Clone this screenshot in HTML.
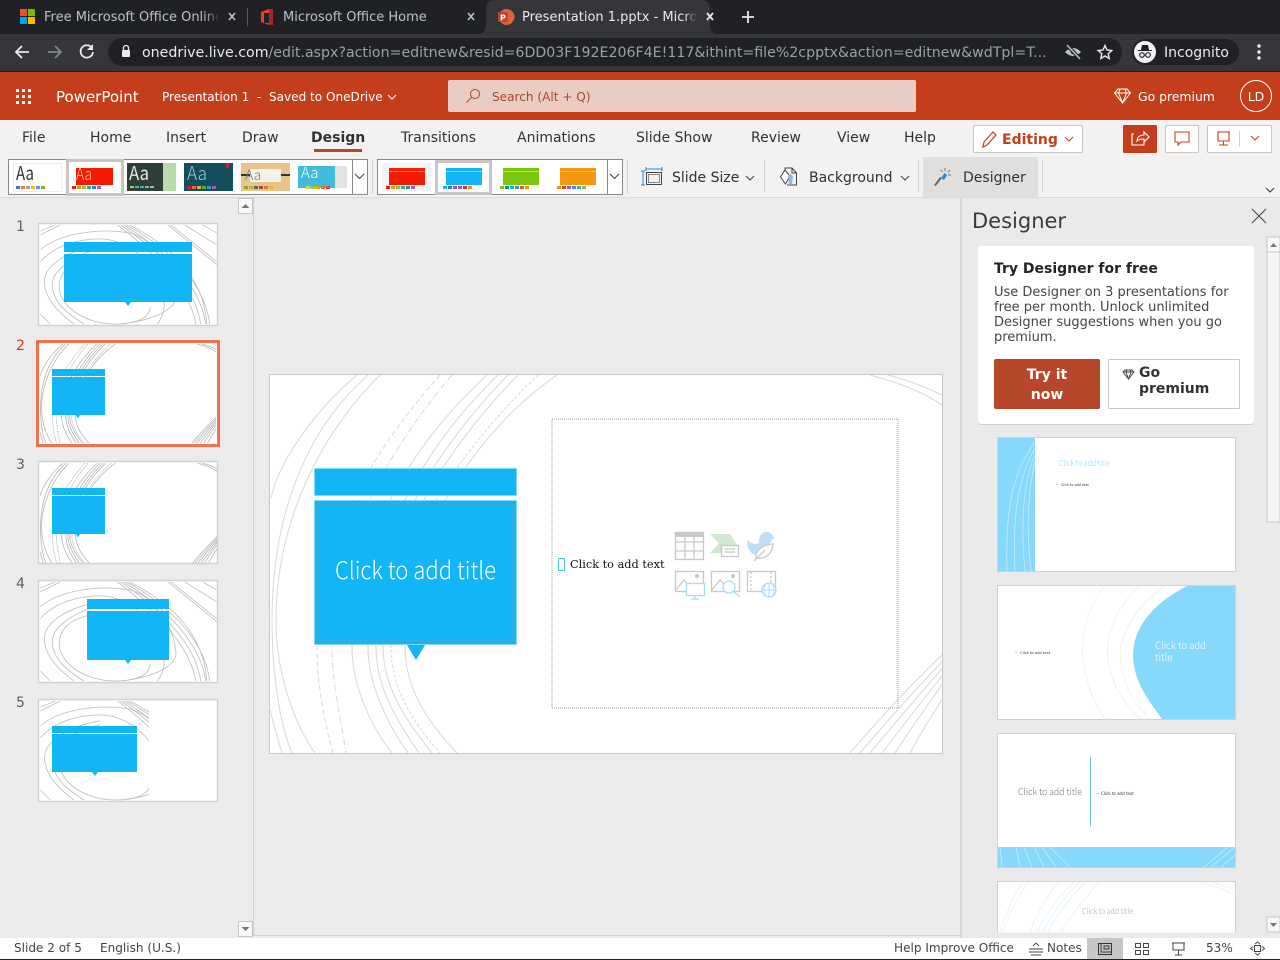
<!DOCTYPE html>
<html><head><meta charset="utf-8"><title>Presentation 1.pptx</title>
<style>
html,body{margin:0;padding:0;width:1280px;height:960px;overflow:hidden;background:#edebe9}
body>svg{display:block;position:absolute;left:0;top:0}
text{font-family:"DejaVu Sans","Liberation Sans",sans-serif;white-space:pre}
.rb{font-size:14px;fill:#323130}
.st{font-size:12.07px;fill:#444}
.lt{font-family:"Noto Sans CJK JP","Liberation Sans",sans-serif;font-weight:300}
.rg{font-family:"Noto Sans CJK JP","Liberation Sans",sans-serif;font-weight:400}
.n{font-size:14px;fill:#605e5c}
</style></head><body>
<svg width="1280" height="960" viewBox="0 0 1280 960">
<defs>
<linearGradient id="f1"><stop offset="0" stop-color="#202124" stop-opacity="0"/><stop offset="1" stop-color="#202124"/></linearGradient>
<linearGradient id="f2"><stop offset="0" stop-color="#35363a" stop-opacity="0"/><stop offset="1" stop-color="#35363a"/></linearGradient>
<g id="c2" fill="none">
<path d="M87 0C40 40 8 90 1 123"/>
<path d="M98 0C30 60 2 150 2 245C2 300 10 350 22 378"/>
<path d="M110 0C40 70 6 160 6 245C6 300 25 350 45 378"/>
<path d="M0 335C4 350 8 365 12 378"/>
<path d="M170 0C90 90 47 180 47 272C47 310 55 350 63 378" stroke-dasharray="5 3"/>
<path d="M182 0C105 90 62 190 62 272C62 310 72 350 76 378" stroke-dasharray="6 2 1 2"/>
<path d="M217 0C130 80 82 180 82 272C82 310 100 350 122 378"/>
<path d="M228 0C145 80 98 180 98 272C98 310 118 350 138 378"/>
<path d="M238 0C155 85 106 180 106 272C106 315 130 350 149 378"/>
<path d="M248 0C165 85 113 180 113 272C113 315 140 350 162 378"/>
<path d="M268 0C180 85 121 180 121 272C121 315 145 350 170 378" stroke-dasharray="3 2"/>
<path d="M287 0C200 60 135 170 135 272C135 315 160 350 187 378"/>
<path d="M600 0C630 8 655 18 672 30M618 0C640 6 660 14 672 20"/>
<path d="M672 280Q630 320 580 378M672 287Q635 325 590 378M672 294Q640 330 600 378M672 301Q645 335 612 378M672 310Q650 340 625 378M672 325Q655 350 640 378"/>
</g>
<g id="c1" fill="none">
<path d="M0 25C20 8 60 3 90 8C115 14 135 45 137 72C137 85 115 96 82 100"/>
<path d="M0 37C15 20 40 14 60 14C95 14 125 50 125 80C125 88 122 95 118 100"/>
<path d="M60 20C30 25 4 40 4 57C4 75 20 90 34 100"/>
<path d="M60 24C35 30 12 45 12 60C12 78 28 90 44 100"/>
<path d="M48 34C30 38 19 48 19 62C19 82 45 100 75 100C95 100 110 95 111 83"/>
<path d="M0 90Q5 95 10 100M0 6L15 0M0 10L20 0"/>
<path d="M87 0C115 15 165 50 171 100M84 0C112 17 160 52 167 100M90 0C120 15 165 45 168 100M81 0C108 18 155 55 162 100M78 0C104 20 150 58 157 100"/>
<path d="M129 0L178 40M132 0L178 37M146 0L178 20M164 0L178 8"/>
</g>
</defs>

<!-- browser chrome -->
<rect width="1280" height="34" fill="#202124"/>
<rect y="34" width="1280" height="37" fill="#35363a"/>
<rect y="71" width="1280" height="1" fill="#1d1d1f"/>
<path d="M477 34q9 0 9-9V9q0-9 9-9H701q9 0 9 9V25q0 9 9 9z" fill="#35363a"/>
<rect x="20" y="9" width="7" height="7" fill="#f25022"/><rect x="28" y="9" width="7" height="7" fill="#7fba00"/><rect x="20" y="17" width="7" height="7" fill="#00a4ef"/><rect x="28" y="17" width="7" height="7" fill="#ffb900"/>
<text x="44" y="21" font-size="13" fill="#bdc1c6">Free Microsoft Office Online</text>
<rect x="204" y="4" width="16" height="26" fill="url(#f1)"/><rect x="220" y="4" width="6" height="26" fill="#202124"/>
<path d="M229 13l6 7M235 13l-6 7" stroke="#bdc1c6" stroke-width="1.6"/>
<rect x="247" y="8" width="1" height="18" fill="#55565a"/>
<path d="M261 12l8-3h4v16h-4l-8-3z" fill="#e8432a"/><path d="M264 13h5v10h-5z" fill="#202124"/><path d="M269 9h4v16h-4z" fill="#a4262c"/>
<text x="283" y="21" font-size="13" fill="#bdc1c6">Microsoft Office Home</text>
<path d="M468 13l6 7M474 13l-6 7" stroke="#bdc1c6" stroke-width="1.6"/>
<circle cx="506.500" cy="17" r="8" fill="#e0603a"/><rect x="498" y="12" width="10" height="10" rx="1" fill="#b7472a"/><text x="500" y="20.500" font-size="8" font-weight="bold" fill="#fff">P</text>
<text x="522" y="21" font-size="13" fill="#e8eaed">Presentation 1.pptx - Micro</text>
<rect x="684" y="4" width="13" height="26" fill="url(#f2)"/>
<path d="M707 13l6 7M713 13l-6 7" stroke="#e8eaed" stroke-width="1.8"/>
<path d="M748 11v12M742 17h12" stroke="#e8eaed" stroke-width="1.8"/>
<path d="M29 52H16M22 46l-6 6 6 6" fill="none" stroke="#e8eaed" stroke-width="1.8"/>
<path d="M61 52H48M55 46l6 6-6 6" fill="none" stroke="#80868b" stroke-width="1.8"/>
<path d="M92 48a6.200 6.200 0 1 0 1 4" fill="none" stroke="#e8eaed" stroke-width="1.800"/><path d="M93 44v6h-6z" fill="#e8eaed"/>
<rect x="108" y="38" width="1014" height="28" rx="14" fill="#202124"/>
<rect x="122" y="50" width="8" height="7" rx="1" fill="#e8eaed"/><path d="M123.500 50v-2a2.500 2.500 0 0 1 5 0v2" fill="none" stroke="#e8eaed" stroke-width="1.300"/>
<text x="142" y="57" font-size="14.180" fill="#e8eaed">onedrive.live.com<tspan fill="#9aa0a6">/edit.aspx?action=editnew&amp;resid=6DD03F192E206F4E!117&amp;ithint=file%2cpptx&amp;action=editnew&amp;wdTpl=T...</tspan></text>
<path d="M1065 52q8-8 16 0q-8 8-16 0z" fill="#bdc1c6"/><circle cx="1073" cy="52" r="2.200" fill="#202124"/><path d="M1067 45l13 14" stroke="#202124" stroke-width="3.500"/><path d="M1067 45l13 14" stroke="#bdc1c6" stroke-width="1.500"/>
<path d="M1105 45.500l2 4.500 4.800.5-3.600 3.200 1 4.800-4.200-2.500-4.200 2.500 1-4.800-3.600-3.200 4.800-.5z" fill="none" stroke="#e8eaed" stroke-width="1.400"/>
<rect x="1132" y="39" width="107" height="26" rx="13" fill="#202124"/>
<circle cx="1145" cy="52" r="11" fill="#f1f3f4"/>
<path d="M1138 50h14v1h-14zM1141 50l1-5h6l1 5z" fill="#202124"/><circle cx="1142" cy="55" r="2.300" fill="none" stroke="#202124" stroke-width="1.200"/><circle cx="1148" cy="55" r="2.300" fill="none" stroke="#202124" stroke-width="1.200"/>
<text x="1164" y="57" font-size="14" fill="#e8eaed">Incognito</text>
<circle cx="1259" cy="46" r="1.700" fill="#e8eaed"/><circle cx="1259" cy="52" r="1.700" fill="#e8eaed"/><circle cx="1259" cy="58" r="1.700" fill="#e8eaed"/>

<!-- title bar -->
<rect y="72" width="1280" height="48" fill="#c43e1c"/>
<g fill="#fff"><rect x="16" y="89" width="3" height="3"/><rect x="22" y="89" width="3" height="3"/><rect x="28" y="89" width="3" height="3"/><rect x="16" y="95" width="3" height="3"/><rect x="22" y="95" width="3" height="3"/><rect x="28" y="95" width="3" height="3"/><rect x="16" y="101" width="3" height="3"/><rect x="22" y="101" width="3" height="3"/><rect x="28" y="101" width="3" height="3"/></g>
<text x="56" y="102" font-size="15" fill="#fff">PowerPoint</text>
<text x="162" y="101" font-size="12.070" fill="#fff">Presentation 1  -  Saved to OneDrive</text>
<path d="M388 95l4 4 4-4" fill="none" stroke="#fff"/>
<rect x="448" y="80" width="468" height="32" rx="2" fill="#e9cdc5"/>
<circle cx="475" cy="94" r="4.500" fill="none" stroke="#a4482e"/><path d="M471.500 97.500l-5 5" stroke="#a4482e"/>
<text x="492" y="101" font-size="12.100" fill="#a8472c">Search (Alt + Q)</text>
<path d="M1114.500 93l3.500-4h9l3.500 4-8 10z M1114.500 93h16M1120 89l-1.500 4 4 10 4-10-1.500-4" fill="none" stroke="#fff"/>
<text x="1138" y="101" font-size="12.400" fill="#fff">Go premium</text>
<circle cx="1256" cy="96" r="15.500" fill="none" stroke="#fff"/>
<text x="1256" y="101" font-size="12.500" fill="#fff" text-anchor="middle">LD</text>

<!-- ribbon -->
<rect y="120" width="1280" height="77" fill="#f3f2f1"/>
<rect y="197" width="1280" height="1" fill="#dcdad8"/>
<text class="rb" x="22" y="142">File</text>
<text class="rb" x="90" y="142">Home</text>
<text class="rb" x="166" y="142">Insert</text>
<text class="rb" x="242" y="142">Draw</text>
<text class="rb" x="311" y="142" font-weight="bold">Design</text>
<rect x="314" y="149" width="48" height="3" fill="#b7472a"/>
<text class="rb" x="401" y="142">Transitions</text>
<text class="rb" x="517" y="142">Animations</text>
<text class="rb" x="636" y="142">Slide Show</text>
<text class="rb" x="751" y="142">Review</text>
<text class="rb" x="837" y="142">View</text>
<text class="rb" x="904" y="142">Help</text>
<rect x="973.500" y="125.500" width="109" height="27" rx="1" fill="#fff" stroke="#c8c6c4"/>
<path d="M983 147l1-5 9-10 3 3-9 10z" fill="none" stroke="#c43e1c" stroke-width="1.200"/>
<text x="1002" y="144" font-size="14" font-weight="bold" fill="#c43e1c">Editing</text>
<path d="M1065 137l4 4 4-4" fill="none" stroke="#c43e1c"/>
<rect x="1123" y="125" width="34" height="28" rx="1" fill="#c43e1c"/>
<path d="M1134 134h-2v11h12v-4M1137 141c0-4 3-6 7-6v-3l5 5-5 5v-3c-3 0-5 0-7 2z" fill="none" stroke="#fff" stroke-width="1.100"/>
<rect x="1165.500" y="125.500" width="33" height="27" rx="1" fill="#fff" stroke="#c8c6c4"/>
<path d="M1175 132h14v10h-8l-3 3v-3h-3z" fill="none" stroke="#c43e1c" stroke-width="1.100"/>
<rect x="1207.500" y="125.500" width="64" height="27" rx="1" fill="#fff" stroke="#c8c6c4"/>
<path d="M1217 132h13M1218 132v9h11v-9M1223.500 141v4M1219 145h9" fill="none" stroke="#c43e1c" stroke-width="1.100"/>
<rect x="1239" y="131" width="1" height="16" fill="#d2d0ce"/>
<path d="M1251 136l4 4 4-4" fill="none" stroke="#c43e1c"/>

<!-- theme gallery -->
<rect x="8.500" y="159.500" width="359" height="35" fill="#fff" stroke="#8a8886"/>
<rect x="352" y="160" width="1" height="34" fill="#8a8886"/>
<path d="M355 174l4.500 4.500 4.500-4.500" fill="none" stroke="#444"/>
<rect x="372" y="160" width="1" height="34" fill="#d2d0ce"/>
<rect x="13.500" y="163.500" width="48" height="28" fill="#fff" stroke="#eee"/>
<text class="rg" x="16" y="180" font-size="19" fill="#333" textLength="18" lengthAdjust="spacingAndGlyphs">Aa</text>
<g><rect x="16" y="186" width="4" height="3" fill="#4472c4"/><rect x="21" y="186" width="4" height="3" fill="#ed7d31"/><rect x="26" y="186" width="4" height="3" fill="#a5a5a5"/><rect x="31" y="186" width="4" height="3" fill="#ffc000"/><rect x="36" y="186" width="4" height="3" fill="#5b9bd5"/><rect x="41" y="186" width="4" height="3" fill="#70ad47"/></g>
<rect x="67.500" y="160.500" width="55" height="34" fill="#fff" stroke="#c8c6c4" stroke-width="3"/>
<rect x="76" y="168" width="37" height="17" fill="#f61b00"/>
<text class="lt" x="76" y="180" font-size="17" fill="#fbb" textLength="16" lengthAdjust="spacingAndGlyphs">Aa</text>
<g><rect x="72" y="186" width="4" height="3" fill="#f61b00"/><rect x="77" y="186" width="4" height="3" fill="#f79009"/><rect x="82" y="186" width="4" height="3" fill="#8bc34a"/><rect x="87" y="186" width="4" height="3" fill="#2bb673"/><rect x="92" y="186" width="4" height="3" fill="#2e86c1"/><rect x="97" y="186" width="4" height="3" fill="#a65cc7"/></g>
<rect x="127" y="163" width="36" height="28" fill="#2c3e36"/><rect x="163" y="163" width="13" height="28" fill="#b7dca9"/>
<text class="rg" x="129" y="180" font-size="19" fill="#e6e6e6" textLength="20" lengthAdjust="spacingAndGlyphs">Aa</text>
<g><rect x="130" y="186" width="4" height="2" fill="#a3c76d"/><rect x="135" y="186" width="4" height="2" fill="#5bb58f"/><rect x="140" y="186" width="4" height="2" fill="#4aa"/><rect x="145" y="186" width="4" height="2" fill="#6bc"/><rect x="150" y="186" width="4" height="2" fill="#9bb"/></g>
<rect x="184" y="163" width="49" height="28" fill="#144d5b"/><rect x="226" y="163" width="3" height="5" fill="#c22"/>
<text class="lt" x="187" y="180" font-size="19" fill="#9cc" textLength="20" lengthAdjust="spacingAndGlyphs">Aa</text>
<g><rect x="187" y="186" width="4" height="3" fill="#c22"/><rect x="192" y="186" width="4" height="3" fill="#e63"/><rect x="197" y="186" width="4" height="3" fill="#ea3"/><rect x="202" y="186" width="4" height="3" fill="#5a5"/><rect x="207" y="186" width="4" height="3" fill="#39a"/><rect x="212" y="186" width="4" height="3" fill="#a5b"/></g>
<rect x="241" y="163" width="49" height="28" fill="#e8c48a"/><rect x="241" y="174" width="49" height="2" fill="#333"/><rect x="250" y="169" width="31" height="13" fill="#f3f1ec"/>
<text class="lt" x="245" y="180" font-size="14" fill="#777">Aa</text>
<g><rect x="244" y="186" width="4" height="3" fill="#8a3"/><rect x="249" y="186" width="4" height="3" fill="#ca3"/><rect x="254" y="186" width="4" height="3" fill="#567"/><rect x="259" y="186" width="4" height="3" fill="#a43"/><rect x="264" y="186" width="4" height="3" fill="#d73"/><rect x="269" y="186" width="4" height="3" fill="#db3"/></g>
<rect x="335" y="166" width="12" height="22" fill="#e3e3e3"/><rect x="298" y="166" width="37" height="22" fill="#41bbd9"/>
<text class="lt" x="301" y="178" font-size="15" fill="#fff">Aa</text>
<g><rect x="306" y="186" width="4" height="3" fill="#ec3"/><rect x="311" y="186" width="4" height="3" fill="#9c3"/><rect x="316" y="186" width="4" height="3" fill="#f90"/><rect x="321" y="186" width="4" height="3" fill="#f63"/><rect x="326" y="186" width="4" height="3" fill="#e44"/></g>

<!-- variants -->
<rect x="377.500" y="159.500" width="245" height="35" fill="#fff" stroke="#8a8886"/>
<rect x="607" y="160" width="1" height="34" fill="#8a8886"/>
<path d="M610 174l4.500 4.500 4.500-4.500" fill="none" stroke="#444"/>
<rect x="382" y="163" width="49" height="28" fill="#f4f4f4"/>
<rect x="389" y="168" width="36" height="17" fill="#f61b00"/><rect x="389" y="171" width="36" height="1" fill="#fa7a6a"/>
<g><rect x="386" y="186" width="4" height="3" fill="#f61b00"/><rect x="391" y="186" width="4" height="3" fill="#f79009"/><rect x="396" y="186" width="4" height="3" fill="#9cb33d"/><rect x="401" y="186" width="4" height="3" fill="#2bb673"/><rect x="406" y="186" width="4" height="3" fill="#2e86c1"/><rect x="411" y="186" width="4" height="3" fill="#a65cc7"/></g>
<rect x="436.500" y="161.500" width="54" height="32" fill="#fff" stroke="#c8c6c4" stroke-width="3"/>
<rect x="446" y="168" width="36" height="17" fill="#12b5f6"/><rect x="446" y="171" width="36" height="1" fill="#80d8fb"/>
<g><rect x="443" y="186" width="4" height="3" fill="#12b5f6"/><rect x="448" y="186" width="4" height="3" fill="#3f6fc4"/><rect x="453" y="186" width="4" height="3" fill="#a64cc7"/><rect x="458" y="186" width="4" height="3" fill="#d63fa8"/><rect x="463" y="186" width="4" height="3" fill="#d92b4b"/><rect x="468" y="186" width="4" height="3" fill="#f79009"/></g>
<rect x="503" y="168" width="36" height="17" fill="#7bc60e"/><rect x="503" y="171" width="36" height="1" fill="#b8e36f"/>
<g><rect x="500" y="186" width="4" height="3" fill="#7bc60e"/><rect x="505" y="186" width="4" height="3" fill="#0b9b6b"/><rect x="510" y="186" width="4" height="3" fill="#12b5d6"/><rect x="515" y="186" width="4" height="3" fill="#3f8fd4"/><rect x="520" y="186" width="4" height="3" fill="#e2572b"/><rect x="525" y="186" width="4" height="3" fill="#f79009"/></g>
<rect x="560" y="168" width="36" height="17" fill="#f4960f"/><rect x="560" y="171" width="36" height="1" fill="#fac77a"/>
<g><rect x="557" y="186" width="4" height="3" fill="#f4960f"/><rect x="562" y="186" width="4" height="3" fill="#e2472b"/><rect x="567" y="186" width="4" height="3" fill="#a64cd7"/><rect x="572" y="186" width="4" height="3" fill="#3f8fe4"/><rect x="577" y="186" width="4" height="3" fill="#2bb6b3"/><rect x="582" y="186" width="4" height="3" fill="#8bc34a"/></g>
<rect x="627" y="160" width="1" height="34" fill="#d2d0ce"/>

<!-- ribbon commands -->
<path d="M646 169h16M643 171v14" fill="none" stroke="#2b88d8"/><path d="M646 167v4M662 167v4M641 171h4M641 185h4" fill="none" stroke="#2b88d8"/>
<rect x="646.500" y="172.500" width="15" height="12" fill="none" stroke="#444"/><rect x="648.500" y="174.500" width="11" height="8" fill="none" stroke="#888"/>
<text class="rb" x="672" y="182">Slide Size</text>
<path d="M746 176l4 4 4-4" fill="none" stroke="#444"/>
<rect x="764" y="160" width="1" height="32" fill="#d2d0ce"/>
<path d="M785 172v-4h7l4.500 5v12h-9.500" fill="none" stroke="#444"/><path d="M792 168v5h4.500" fill="none" stroke="#444"/><path d="M780.500 177l4.500-7 5 6-4.500 8z" fill="#fff" stroke="#444"/><path d="M788 176l3-2 2 3-1 7h-3z" fill="#8abbe6"/>
<text class="rb" x="809" y="182">Background</text>
<path d="M901 176l4 4 4-4" fill="none" stroke="#444"/>
<rect x="918" y="160" width="1" height="32" fill="#d2d0ce"/>
<rect x="923" y="157" width="115" height="40" fill="#e1dfdd"/>
<path d="M935 185.500l6-8" stroke="#666" stroke-width="2"/><path d="M941 178l3.500-5 2.500 2-3 5z" fill="#2b88d8"/><path d="M945 168v3M950 170l-2 2M951 175h-3M941 170l1.500 2" stroke="#777"/>
<text class="rb" x="963" y="182">Designer</text>
<rect x="1042" y="160" width="1" height="32" fill="#d2d0ce"/>
<path d="M1266 188l4 4 4-4" fill="none" stroke="#333"/>

<!-- left pane -->
<rect x="253" y="198" width="1" height="738" fill="#d2d0ce"/>
<rect x="238.500" y="198.500" width="14" height="15" fill="#f8f8f8" stroke="#c8c6c4"/><path d="M241.500 208l4-4 4 4z" fill="#777"/>
<rect x="238.500" y="921.500" width="14" height="15" fill="#f8f8f8" stroke="#c8c6c4"/><path d="M241.500 927l4 4 4-4z" fill="#777"/>

<text class="n" x="16" y="231">1</text>
<rect x="38.500" y="223.500" width="179" height="102" fill="#fff" stroke="#d2d0d4" stroke-width="1.500"/>
<svg x="40" y="225" width="177" height="100" viewBox="0 0 178 101"><use href="#c1" stroke="#bcbcbc" stroke-width=".8"/></svg>
<rect x="64" y="242" width="128" height="10" fill="#12b5f6"/><rect x="64" y="254" width="128" height="48" fill="#12b5f6"/><path d="M125 302h6l-3 4z" fill="#12b5f6"/>

<text class="n" x="16" y="350" style="fill:#c43e1c">2</text>
<rect x="37.500" y="341.500" width="181" height="104" fill="#fff" stroke="#f4714f" stroke-width="3"/>
<svg x="40" y="344" width="176" height="99" viewBox="0 0 672 378"><use href="#c2" stroke="#b5b5b5" stroke-width="3"/></svg>
<rect x="52" y="369" width="53" height="7" fill="#12b5f6"/><rect x="52" y="377" width="53" height="38" fill="#12b5f6"/><path d="M76 415h4l-2 3.500z" fill="#12b5f6"/>

<text class="n" x="16" y="469">3</text>
<rect x="38.500" y="461.500" width="179" height="102" fill="#fff" stroke="#d2d0d4" stroke-width="1.500"/>
<svg x="40" y="463" width="177" height="100" viewBox="0 0 672 378"><use href="#c2" stroke="#b5b5b5" stroke-width="3"/></svg>
<rect x="52" y="488" width="53" height="7" fill="#12b5f6"/><rect x="52" y="496" width="53" height="38" fill="#12b5f6"/><path d="M76 534h4l-2 3.500z" fill="#12b5f6"/>

<text class="n" x="16" y="588">4</text>
<rect x="38.500" y="580.500" width="179" height="102" fill="#fff" stroke="#d2d0d4" stroke-width="1.500"/>
<svg x="40" y="582" width="177" height="100" viewBox="0 0 178 101"><use href="#c1" stroke="#bcbcbc" stroke-width=".8"/></svg>
<rect x="87" y="599" width="82" height="10" fill="#12b5f6"/><rect x="87" y="611" width="82" height="49" fill="#12b5f6"/><path d="M125 660h6l-3 4z" fill="#12b5f6"/>

<text class="n" x="16" y="707">5</text>
<rect x="38.500" y="699.500" width="179" height="102" fill="#fff" stroke="#d2d0d4" stroke-width="1.500"/>
<svg x="40" y="701" width="109" height="100" viewBox="0 0 109 101"><use href="#c1" stroke="#bcbcbc" stroke-width=".8"/></svg>
<rect x="52" y="726" width="85" height="7" fill="#12b5f6"/><rect x="52" y="734" width="85" height="38" fill="#12b5f6"/><path d="M92 772h6l-3 4z" fill="#12b5f6"/>

<!-- main slide -->
<rect x="269.500" y="374.500" width="673" height="379" fill="#fff" stroke="#c8c6c4"/>
<svg x="270" y="375" width="672" height="378" viewBox="0 0 672 378"><use href="#c2" stroke="#d8d8d8" stroke-width="1"/></svg>
<rect x="314.500" y="468.500" width="202" height="27" fill="#12b5f6" stroke="#7fdafc"/>
<rect x="314.500" y="500.500" width="202" height="144" fill="#12b5f6" stroke="#7fdafc"/>
<path d="M407 645h18l-9 15z" fill="#12b5f6"/>
<rect x="318.500" y="504.500" width="194" height="136" fill="none" stroke="#7a9aa8" stroke-dasharray="1 1" opacity=".8"/>
<text class="lt" x="335" y="579" font-size="24" fill="#fff" textLength="161" lengthAdjust="spacingAndGlyphs">Click to add title</text>
<rect x="552" y="419" width="346" height="289" fill="none" stroke="#9a9a9a" stroke-dasharray="1 1"/>
<rect x="558.500" y="558.500" width="6" height="12" fill="none" stroke="#4fc8f5"/>
<text x="570" y="568" font-size="11.300" fill="#111" style="font-family:'DejaVu Serif','Liberation Serif',serif">Click to add text</text>
<!-- content icons -->
<g fill="none" stroke="#c8c8c8" stroke-width="1.300">
<rect x="675.500" y="532.500" width="28" height="27"/><path d="M675 542h28M675 551h28M685 537v23M694 537v23"/>
<rect x="675" y="532" width="29" height="5" fill="#c8c8c8" stroke="none"/>
<path d="M710 534h20l7 11h-15v8h-12l9-9.500z" fill="#cfe8cf" stroke="none"/>
<rect x="721.500" y="545.500" width="17" height="11" fill="#fff"/><path d="M725 549h10M725 552h10"/>
<path d="M747 540C752 544 757 545 759 543C758 536 763 531 768 532C771 533 773 535 773 537L775 537L771 541C768 549 763 555 757 555C750 555 747 547 747 540z" fill="#bfddf5" stroke="none"/>
<path d="M756 558C755 550 763 545 773 544C773 553 765 560 756 558zM754 561L765 550" fill="#fff" stroke="#c8c8c8"/>
<rect x="675.500" y="571.500" width="28" height="20"/><path d="M675 591l9-11 8 9"/><circle cx="697" cy="576" r="1.500" fill="#c8c8c8"/>
<rect x="686.500" y="583.500" width="18" height="12" fill="#fff" stroke="#a9dcf7"/><path d="M695 596v3M691 599h8" stroke="#a9dcf7"/>
<rect x="711.500" y="571.500" width="28" height="20"/><path d="M711 591l9-11 8 9"/><circle cx="733" cy="576" r="1.500" fill="#c8c8c8"/>
<circle cx="729" cy="587" r="6" fill="#fff" stroke="#a9dcf7"/><path d="M733 591l7 6" stroke="#a9dcf7"/>
<rect x="747.500" y="571.500" width="28" height="20"/><path d="M751 572v19M771 572v19" stroke-dasharray="2 2"/>
<circle cx="769" cy="590" r="7" fill="#fff" stroke="#a9dcf7"/><path d="M762 590h14M769 583v14M765.500 584c-2 4-2 8 0 12M772.500 584c2 4 2 8 0 12" stroke="#a9dcf7" stroke-width="1"/>
</g>

<!-- bottom h-scroll line -->
<rect x="254" y="935" width="706" height="1" fill="#d2d0ce"/>

<!-- designer pane -->
<rect x="960" y="198" width="320" height="740" fill="#ebeaea"/>
<rect x="960" y="198" width="2" height="740" fill="#d8d6d4"/>
<text x="972" y="228" font-size="21" fill="#3b3a39">Designer</text>
<path d="M1252 209l14 14M1266 209l-14 14" stroke="#444" stroke-width="1"/>
<rect x="1267" y="237" width="13" height="285" fill="#f5f5f5" stroke="#c8c6c4"/><rect x="1267" y="237" width="13" height="15" fill="#f8f8f8" stroke="#c8c6c4"/><path d="M1270 247l3.500-4 3.500 4z" fill="#777"/>
<rect x="1267" y="917" width="13" height="15" fill="#f8f8f8" stroke="#c8c6c4"/><path d="M1270 923l3.500 4 3.500-4z" fill="#777"/>
<rect x="978" y="246" width="276" height="178" rx="3" fill="#000" opacity=".12" transform="translate(0 1)"/>
<rect x="978" y="246" width="276" height="178" rx="3" fill="#fff"/>
<text x="994" y="273" font-size="14" font-weight="bold" fill="#252423">Try Designer for free</text>
<g font-size="13" fill="#444"><text x="994" y="296">Use Designer on 3 presentations for</text><text x="994" y="311">free per month. Unlock unlimited</text><text x="994" y="326">Designer suggestions when you go</text><text x="994" y="341">premium.</text></g>
<rect x="994" y="359" width="106" height="50" rx="2" fill="#b7472a"/>
<text x="1047" y="379" font-size="14" font-weight="bold" fill="#fff" text-anchor="middle">Try it</text>
<text x="1047" y="399" font-size="14" font-weight="bold" fill="#fff" text-anchor="middle">now</text>
<rect x="1108.500" y="359.500" width="131" height="49" rx="1" fill="#fff" stroke="#c8c6c4"/>
<path d="M1123 372l2-2h7l2 2-5.500 7z M1123 372h11M1127 370l-1 2 2.500 7 2.500-7-1-2" fill="none" stroke="#444" stroke-width=".9"/>
<text x="1139" y="377" font-size="14" font-weight="bold" fill="#323130">Go</text>
<text x="1139" y="393" font-size="14" font-weight="bold" fill="#323130">premium</text>

<!-- design ideas -->
<rect x="997.500" y="437.500" width="238" height="134" fill="#fff" stroke="#d2d0d4"/>
<rect x="998" y="438" width="37" height="133" fill="#87d9fb"/>
<g fill="none" stroke="#fff" opacity=".5" stroke-width=".8"><path d="M1035 442C1015 470 1005 500 1007 571M1035 448C1020 475 1012 510 1015 571M1035 455C1024 480 1020 520 1025 571M1035 462C1028 490 1026 530 1031 571"/></g>
<text class="lt" x="1059" y="466" font-size="8" fill="#87d9fb" textLength="51" lengthAdjust="spacingAndGlyphs">Click to add title</text>
<rect x="1056" y="484" width="2" height="1" fill="#87d9fb"/>
<text x="1061" y="486" font-size="3.400" fill="#333">Click to add text</text>

<rect x="997.500" y="585.500" width="238" height="134" fill="#fff" stroke="#d2d0d4"/>
<path d="M1187 586C1150 605 1133 630 1133 655C1133 680 1148 700 1162 719H1235V586z" fill="#87d9fb"/>
<g fill="none" stroke="#eee" stroke-width=".8"><path d="M1105 586C1085 610 1081 640 1083 660C1087 685 1095 705 1105 719"/><path d="M1140 586C1112 610 1106 640 1108 660C1112 685 1125 705 1140 719"/><path d="M1165 586C1130 610 1120 640 1120 655C1122 685 1135 705 1150 719"/></g>
<text class="lt" x="1155" y="649" font-size="10" fill="#fff" textLength="51" lengthAdjust="spacingAndGlyphs">Click to add</text>
<text class="lt" x="1155" y="661" font-size="10" fill="#fff">title</text>
<rect x="1015" y="652" width="2" height="1" fill="#87d9fb"/>
<text x="1020" y="654" font-size="3.700" fill="#333">Click to add text</text>

<rect x="997.500" y="733.500" width="238" height="134" fill="#fff" stroke="#d2d0d4"/>
<rect x="1090" y="757" width="1" height="69" fill="#6fc3e0"/>
<text class="lt" x="1018" y="795" font-size="9.500" fill="#777" textLength="64" lengthAdjust="spacingAndGlyphs">Click to add title</text>
<rect x="1097" y="793" width="2" height="1" fill="#87d9fb"/>
<text x="1101" y="795" font-size="4" fill="#333">Click to add text</text>
<rect x="998" y="847" width="237" height="20" fill="#87d9fb"/>
<g fill="none" stroke="#fff" opacity=".6" stroke-width=".7"><path d="M1000 847l2 20M1016 847l4 20M1024 847l8 20M1034 847l10 20M1042 847l14 20M1050 847l20 20M1235 847l-24 20M1228 847l-24 20M1235 855l-14 12"/></g>

<rect x="997.500" y="881.500" width="238" height="51" fill="#fff"/>
<path d="M997.500 933V881.500H1235.500V933" fill="none" stroke="#d2d0d4"/>
<g fill="none" stroke="#e6f4fa"><path d="M1023 882Q1008 905 1000 932M1028 882Q1012 905 1003 932M1058 882Q1040 905 1030 932M1074 882Q1050 905 1037 932M1080 882Q1056 905 1043 932M1086 882Q1062 905 1048 932M1100 882Q1078 905 1060 932M1200 882Q1222 888 1235 895M1212 882Q1226 886 1235 890"/></g>
<text class="lt" x="1082" y="914" font-size="8" fill="#aaa" textLength="51" lengthAdjust="spacingAndGlyphs">Click to add title</text>

<!-- status bar -->
<rect y="938" width="1280" height="21" fill="#fff"/>
<rect y="959" width="1280" height="1" fill="#222"/>
<text class="st" x="14" y="952">Slide 2 of 5</text>
<text class="st" x="100" y="952">English (U.S.)</text>
<text class="st" x="894" y="952">Help Improve Office</text>
<path d="M1029 949h14M1029 952h14M1031 955h10M1033 946l3-3 3 3" fill="none" stroke="#444" stroke-width=".9"/>
<text class="st" x="1047" y="952">Notes</text>
<rect x="1087" y="938" width="36" height="21" fill="#c8c6c4"/>
<rect x="1098.500" y="943.500" width="13" height="11" fill="none" stroke="#333"/><path d="M1101 944v8h10M1104 946h5v3h-5z" fill="none" stroke="#333" stroke-width=".9"/>
<g fill="none" stroke="#444"><rect x="1135.500" y="943.500" width="5" height="4"/><rect x="1143.500" y="943.500" width="5" height="4"/><rect x="1135.500" y="950.500" width="5" height="4"/><rect x="1143.500" y="950.500" width="5" height="4"/>
<path d="M1172 943h13M1173 943v7h11v-7M1178.500 950v5M1175 955h7"/></g>
<text class="st" x="1206" y="952">53%</text>
<g fill="none" stroke="#444"><rect x="1254.500" y="945.500" width="6" height="6"/><path d="M1255 944l2.500-2 2.500 2M1255 953l2.500 2 2.500-2M1253 946.500l-2.500 2 2.500 2M1262 946.500l2.500 2-2.500 2"/></g>
</svg>
</body></html>
